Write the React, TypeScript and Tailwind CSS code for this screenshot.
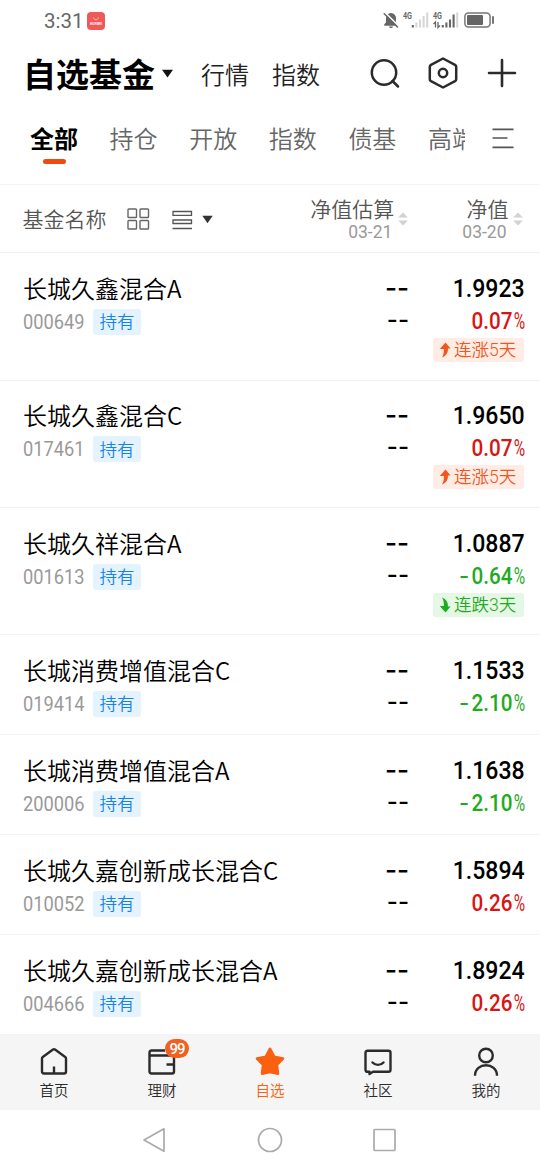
import type { ReactNode } from 'react';
import clsx from 'clsx';

type Fund = {
  name: string;
  code: string;
  nav: string;
  change: string;
  streak?: string;
};

const funds: Fund[] = [
  { name: '长城久鑫混合A', code: '000649', nav: '1.9923', change: '0.07', streak: '连涨5天' },
  { name: '长城久鑫混合C', code: '017461', nav: '1.9650', change: '0.07', streak: '连涨5天' },
  { name: '长城久祥混合A', code: '001613', nav: '1.0887', change: '-0.64', streak: '连跌3天' },
  { name: '长城消费增值混合C', code: '019414', nav: '1.1533', change: '-2.10' },
  { name: '长城消费增值混合A', code: '200006', nav: '1.1638', change: '-2.10' },
  { name: '长城久嘉创新成长混合C', code: '010052', nav: '1.5894', change: '0.26' },
  { name: '长城久嘉创新成长混合A', code: '004666', nav: '1.8924', change: '0.26' },
];

const tabs = ['持仓', '开放', '指数', '债基', '高端'];

const StatusBar = () => (
  <div className="flex h-10 items-center pt-[2px] pl-[44px] pr-[45px] text-[#666]">
    <span className="w-[43px] font-['Roboto',sans-serif] text-[20.5px] leading-5">3:31</span>
    <div className="flex h-[18px] w-[18px] flex-col items-center justify-center rounded-[4px] bg-[#ee5a5a]">
      <svg width="6" height="4" viewBox="0 0 6 4" fill="none" stroke="#fff" strokeWidth="0.7" opacity="0.8">
        <path d="M.5.5c.6 3 4.4 3 5 0" />
      </svg>
      <span className="mt-px text-[3px] leading-[4px] font-bold text-white">HUAWEI</span>
    </div>
    <div className="ml-auto flex items-center">
      <svg className="-translate-y-px" width="16" height="17" viewBox="0 0 16 17">
        <path d="M8 1c-3.300.3-5 2.500-5 5.200v4L1.200 12.500v1.200h13.600v-1.200L13 10.200v-4C13 3.500 11.300 1.300 8 1zM6 14.500h4c-.4 2-3.600 2-4 0z" fill="currentColor" />
        <path d="M2 .5l14 14" stroke="#fff" strokeWidth="1.600" />
        <path d="M.800 1.300l14.200 14.200" stroke="currentColor" strokeWidth="1.500" />
      </svg>
      <svg className="ml-[4px] -translate-y-px" width="26" height="18" viewBox="0 0 26 18">
        <text x="0" y="8" fontSize="8.500" fontWeight="700" fontFamily="Roboto, sans-serif" fill="currentColor" textLength="9" lengthAdjust="spacingAndGlyphs">4G</text>
        <path d="M9.800 16.500v-2.500" stroke="#666" strokeWidth="2.100" />
        <path d="M13.400 16.500v-5M17 16.500v-8M20.600 16.500V5M24.200 16.500V1.500" stroke="#d6d6d6" strokeWidth="2.100" />
      </svg>
      <svg className="ml-[4px] -translate-y-px" width="26" height="18" viewBox="0 0 26 18">
        <text x="0" y="8" fontSize="8.500" fontWeight="700" fontFamily="Roboto, sans-serif" fill="currentColor" textLength="9" lengthAdjust="spacingAndGlyphs">4G</text>
        <path d="M.5 13l2-2v5.500M5 11v5.500l2-2" stroke="#666" strokeWidth="1.300" fill="none" />
        <path d="M9.800 16.500v-2.500M13.400 16.500v-5M17 16.500v-8M20.600 16.500V3.500" stroke="#666" strokeWidth="2.100" />
        <path d="M24.200 16.500V1.500" stroke="#d6d6d6" strokeWidth="2.100" />
      </svg>
      <svg className="ml-[5px] -translate-y-px" width="31" height="16" viewBox="0 0 31 16">
        <rect x=".9" y=".9" width="25.200" height="14.200" rx="3.500" fill="none" stroke="#777" strokeWidth="1.500" />
        <rect x="3" y="3" width="16" height="10" rx="1" fill="#666" />
        <rect x="28" y="4" width="2" height="8" rx="1" fill="#777" />
      </svg>
    </div>
  </div>
);

const TitleBar = () => (
  <div className="flex h-[68px] items-center pl-[23px] pr-[23.500px] text-[#222]">
    <h1 className="pb-[2px] text-[33px] leading-[40px] font-bold text-black">自选基金</h1>
    <svg className="ml-[6px] -translate-y-px" width="13" height="9" viewBox="0 0 13 9">
      <path d="M1 .8h11L6.500 8.500z" fill="#111" />
    </svg>
    <span className="ml-[27px] pb-px text-[24px] leading-8 font-[350]">行情</span>
    <span className="ml-[23px] pb-px text-[24px] leading-8 font-[350]">指数</span>
    <div className="ml-auto flex items-center">
      <svg width="30" height="30" viewBox="0 0 30 30" fill="none" stroke="#2b2b2b" strokeWidth="2.500" strokeLinecap="round">
        <circle cx="14" cy="13.500" r="12.200" />
        <path d="M22.500 22l5.500 5.500" />
      </svg>
      <svg className="ml-[28.500px] -translate-y-px" width="30" height="32" viewBox="0 0 30 32" fill="none" stroke="#2b2b2b" strokeWidth="2.500" strokeLinejoin="round">
        <path d="M15 1.500l12 6.300q1.200.7 1.200 2v12.400q0 1.300-1.200 2L15 30.500 3 24.200q-1.200-.7-1.200-2V9.800q0-1.300 1.200-2z" />
        <circle cx="15" cy="16" r="4.200" />
      </svg>
      <svg className="ml-[28.500px] -translate-y-px" width="30" height="30" viewBox="0 0 30 30" fill="none" stroke="#2b2b2b" strokeWidth="2.600" strokeLinecap="round">
        <path d="M2 15h26M15 2v26" />
      </svg>
    </div>
  </div>
);

const TabBar = () => (
  <div className="flex h-[77px] items-start border-b border-[#f3f3f3] pt-[12px] pl-[30px] text-[24px] leading-9">
    <div className="flex w-[435px] gap-[31.600px] overflow-hidden whitespace-nowrap text-[#666]">
      <div className="flex shrink-0 flex-col items-center font-bold text-black">
        全部
        <span className="mt-[3px] h-[5px] w-[23px] rounded-full bg-[#f04a10]" />
      </div>
      {tabs.map(tab => (
        <span key={tab} className="shrink-0 font-[350]">{tab}</span>
      ))}
    </div>
    <svg className="mt-[7px] ml-[27px]" width="22" height="22" viewBox="0 0 22 22" stroke="#555" strokeWidth="1.700">
      <path d="M.5 2.300h21M.5 11h15M.5 20.300h21" />
    </svg>
  </div>
);

const SortArrows = () => (
  <svg width="10" height="14" viewBox="0 0 10 14" fill="#d2d2d2">
    <path d="M5 .5l4.800 5H.2zM5 13.500l4.800-5H.2z" />
  </svg>
);

const SortHeader = ({ label, date }: { label: string; date: string }) => (
  <div className="flex items-center gap-[4px]">
    <div className="flex flex-col items-end">
      <span className="text-[21px] leading-[25px] font-[350] text-[#555]">{label}</span>
      <span className="mr-[2px] font-['Roboto',sans-serif] text-[17.500px] leading-[22px] text-[#999]">{date}</span>
    </div>
    <SortArrows />
  </div>
);

const TableHeader = () => (
  <div className="flex h-[68.400px] items-center border-b border-[#f0f0f0] pl-[22.500px]">
    <span className="text-[21px] font-[350] text-[#555]">基金名称</span>
    <svg className="ml-[20.500px] mt-[2px]" width="23" height="23" viewBox="0 0 23 23" fill="none" stroke="#666" strokeWidth="1.400">
      <rect x="1" y="1" width="8.500" height="8.500" rx=".8" />
      <rect x="13" y="1" width="8.500" height="8.500" rx=".8" />
      <rect x="1" y="12.500" width="8.500" height="8.500" rx=".8" />
      <rect x="13" y="12.500" width="8.500" height="8.500" rx=".8" />
    </svg>
    <svg className="ml-[22px] mt-[2px]" width="21" height="20" viewBox="0 0 21 20" fill="none" stroke="#555" strokeWidth="1.300">
      <path d="M1 1.500h18.500v3.800H1zM1 10h18.500v3.500H1zM.5 18.500H20" />
    </svg>
    <svg className="ml-[9px] mt-px" width="11" height="9" viewBox="0 0 11 9">
      <path d="M.3.800h10.400L5.500 8.200z" fill="#333" />
    </svg>
    <div className="ml-auto flex gap-[54px] pt-px pr-[17.500px]">
      <SortHeader label="净值估算" date="03-21" />
      <SortHeader label="净值" date="03-20" />
    </div>
  </div>
);

const StreakTag = ({ down, children }: { down: boolean; children: ReactNode }) => (
  <div className={clsx('mt-px mr-px flex h-6 w-[91px] items-center rounded-[3px] pl-[6px] text-[17.500px] leading-6 font-[350]', down ? 'bg-[#e5f7e5] text-[#1fab1f]' : 'bg-[#ffece5] text-[#f0561d]')}>
    <svg className={clsx('mr-[3px] shrink-0', down && '-scale-y-100')} width="12" height="16" viewBox="0 0 12 16" fill="currentColor">
      <path d="M6.500.500L11.600 6.500H8.900c.3 4-1.700 7.500-6 9 1.800-2.800 2.200-5.700 2-8.600L.8 7z" />
    </svg>
    <span className="whitespace-nowrap">{children}</span>
  </div>
);

const FundRow = ({ name, code, nav, change, streak }: Fund) => {
  const down = change.startsWith('-');
  return (
    <div className={clsx('flex border-b border-[#f3f3f3] pt-[18.600px] pr-[15px] pl-[23px]', streak ? 'h-[127.330px]' : 'h-[100px]')}>
      <div className="flex-1">
        <div className="text-[24px] leading-8 font-[350] whitespace-nowrap text-black">{name}</div>
        <div className="mt-[5px] flex items-center">
          <span className="w-[70px] font-['Roboto',sans-serif] text-[20.500px] leading-[26px] text-[#999]">
            <span className="inline-block origin-left scale-x-[0.89]">{code}</span>
          </span>
          <span className="flex h-[26px] w-12 items-center justify-center rounded-[3px] bg-[#e5f3fe] pb-px text-[17.500px] font-[350] text-[#1684e6]">持有</span>
        </div>
      </div>
      <div className="flex flex-col items-end font-['Inter',sans-serif] font-medium text-black">
        <span className="text-[26px] leading-8">--</span>
        <span className="text-[24px] leading-8">--</span>
      </div>
      <div className="flex w-[116px] flex-col items-end font-['Roboto','Noto_Sans_CJK_SC',sans-serif]">
        <span className="origin-right scale-x-[0.87] text-[26.500px] leading-8 font-medium text-black">{nav}</span>
        <span className={clsx('mt-px flex items-center text-[23.500px] leading-8 font-medium', down ? 'text-[#1fab1f]' : 'text-[#d81414]')}>
          {down && <span className="mr-[2px] font-['Inter',sans-serif] text-[22px]">-</span>}
          <span className="-ml-[5px] origin-right scale-x-[0.88]">{change.replace('-', '')}</span>
          <span className="-ml-[5px] origin-right scale-x-[0.66] font-normal">%</span>
        </span>
        {streak && <StreakTag down={down}>{streak}</StreakTag>}
      </div>
    </div>
  );
};

const NavItem = ({ label, active, badge, children }: { label: string; active?: boolean; badge?: string; children: ReactNode }) => (
  <div className={clsx('flex flex-1 flex-col items-center pt-3', active ? 'text-[#f9600f]' : 'text-[#2b2b2b]')}>
    <div className="relative h-[30px] w-[30px]">
      {children}
      {badge && (
        <span className="absolute -top-[8px] left-[18px] flex h-[19px] w-6 items-center justify-center rounded-full bg-[#f0601f] font-['Roboto',sans-serif] text-[15px] font-medium tracking-[-1px] text-white">{badge}</span>
      )}
    </div>
    <span className="mt-[2px] text-[14.500px] leading-[22px] font-[350]">{label}</span>
  </div>
);

const iconProps = { width: 30, height: 30, viewBox: '0 0 30 30', fill: 'none', stroke: 'currentColor', strokeWidth: 2.4, strokeLinejoin: 'round' as const };

const BottomNav = () => (
  <nav className="flex h-[75px] bg-[#f5f5f5]">
    <NavItem label="首页">
      <svg {...iconProps}>
        <path d="M3 11.500q0-1 .8-1.600L14 2.600q1-.7 2 0l10.200 7.300q.8.600.8 1.600V24.500q0 2-2 2H5q-2 0-2-2zM15 19.500v7" />
      </svg>
    </NavItem>
    <NavItem label="理财" badge="99">
      <svg {...iconProps}>
        <path d="M27 8.500V24.500q0 2-2 2H4.500q-2 0-2-2V5.500q0-2 2-2H18M2.500 8.500H27M27 17.500h-7.500" />
      </svg>
    </NavItem>
    <NavItem label="自选" active>
      <svg {...iconProps} fill="currentColor" strokeWidth={2.800}>
        <path d="M15 2l4.200 7.800 8.700 1.700-6.100 6.400 1.100 8.800L15 25l-7.900 1.700 1.100-8.800-6.100-6.400 8.700-1.700z" />
      </svg>
    </NavItem>
    <NavItem label="社区">
      <svg {...iconProps}>
        <path d="M4.500 3.800h21q2 0 2 2v17q0 2-2 2H10L6.500 27v-2.200h-2q-2 0-2-2v-17q0-2 2-2z" />
        <path d="M9.500 15.500c3 3.200 8 3.200 11 0" strokeLinecap="round" />
      </svg>
    </NavItem>
    <NavItem label="我的">
      <svg {...iconProps}>
        <circle cx="15" cy="8.500" r="6.800" />
        <path d="M4 28.800C4 14.800 26 14.800 26 28.800" />
      </svg>
    </NavItem>
  </nav>
);

const SystemNav = () => (
  <div className="flex h-[60px] items-center justify-center gap-[89px]">
    <svg width="26" height="26" viewBox="0 0 26 26" fill="none" stroke="#aaa" strokeWidth="1.700" strokeLinejoin="round">
      <path d="M2 13L22 1.800v22.400z" />
    </svg>
    <svg width="26" height="26" viewBox="0 0 26 26" fill="none" stroke="#aaa" strokeWidth="1.700">
      <circle cx="13" cy="13" r="11.500" />
    </svg>
    <svg width="26" height="26" viewBox="0 0 26 26" fill="none" stroke="#aaa" strokeWidth="1.700">
      <rect x="2" y="2.500" width="21" height="21" rx="1" />
    </svg>
  </div>
);

export default function App() {
  return (
    <div className="h-[1170px] w-[540px] overflow-hidden bg-white font-['Noto_Sans_CJK_SC',sans-serif]">
      <StatusBar />
      <TitleBar />
      <TabBar />
      <TableHeader />
      {funds.map(fund => (
        <FundRow key={fund.code} {...fund} />
      ))}
      <BottomNav />
      <SystemNav />
    </div>
  );
}
